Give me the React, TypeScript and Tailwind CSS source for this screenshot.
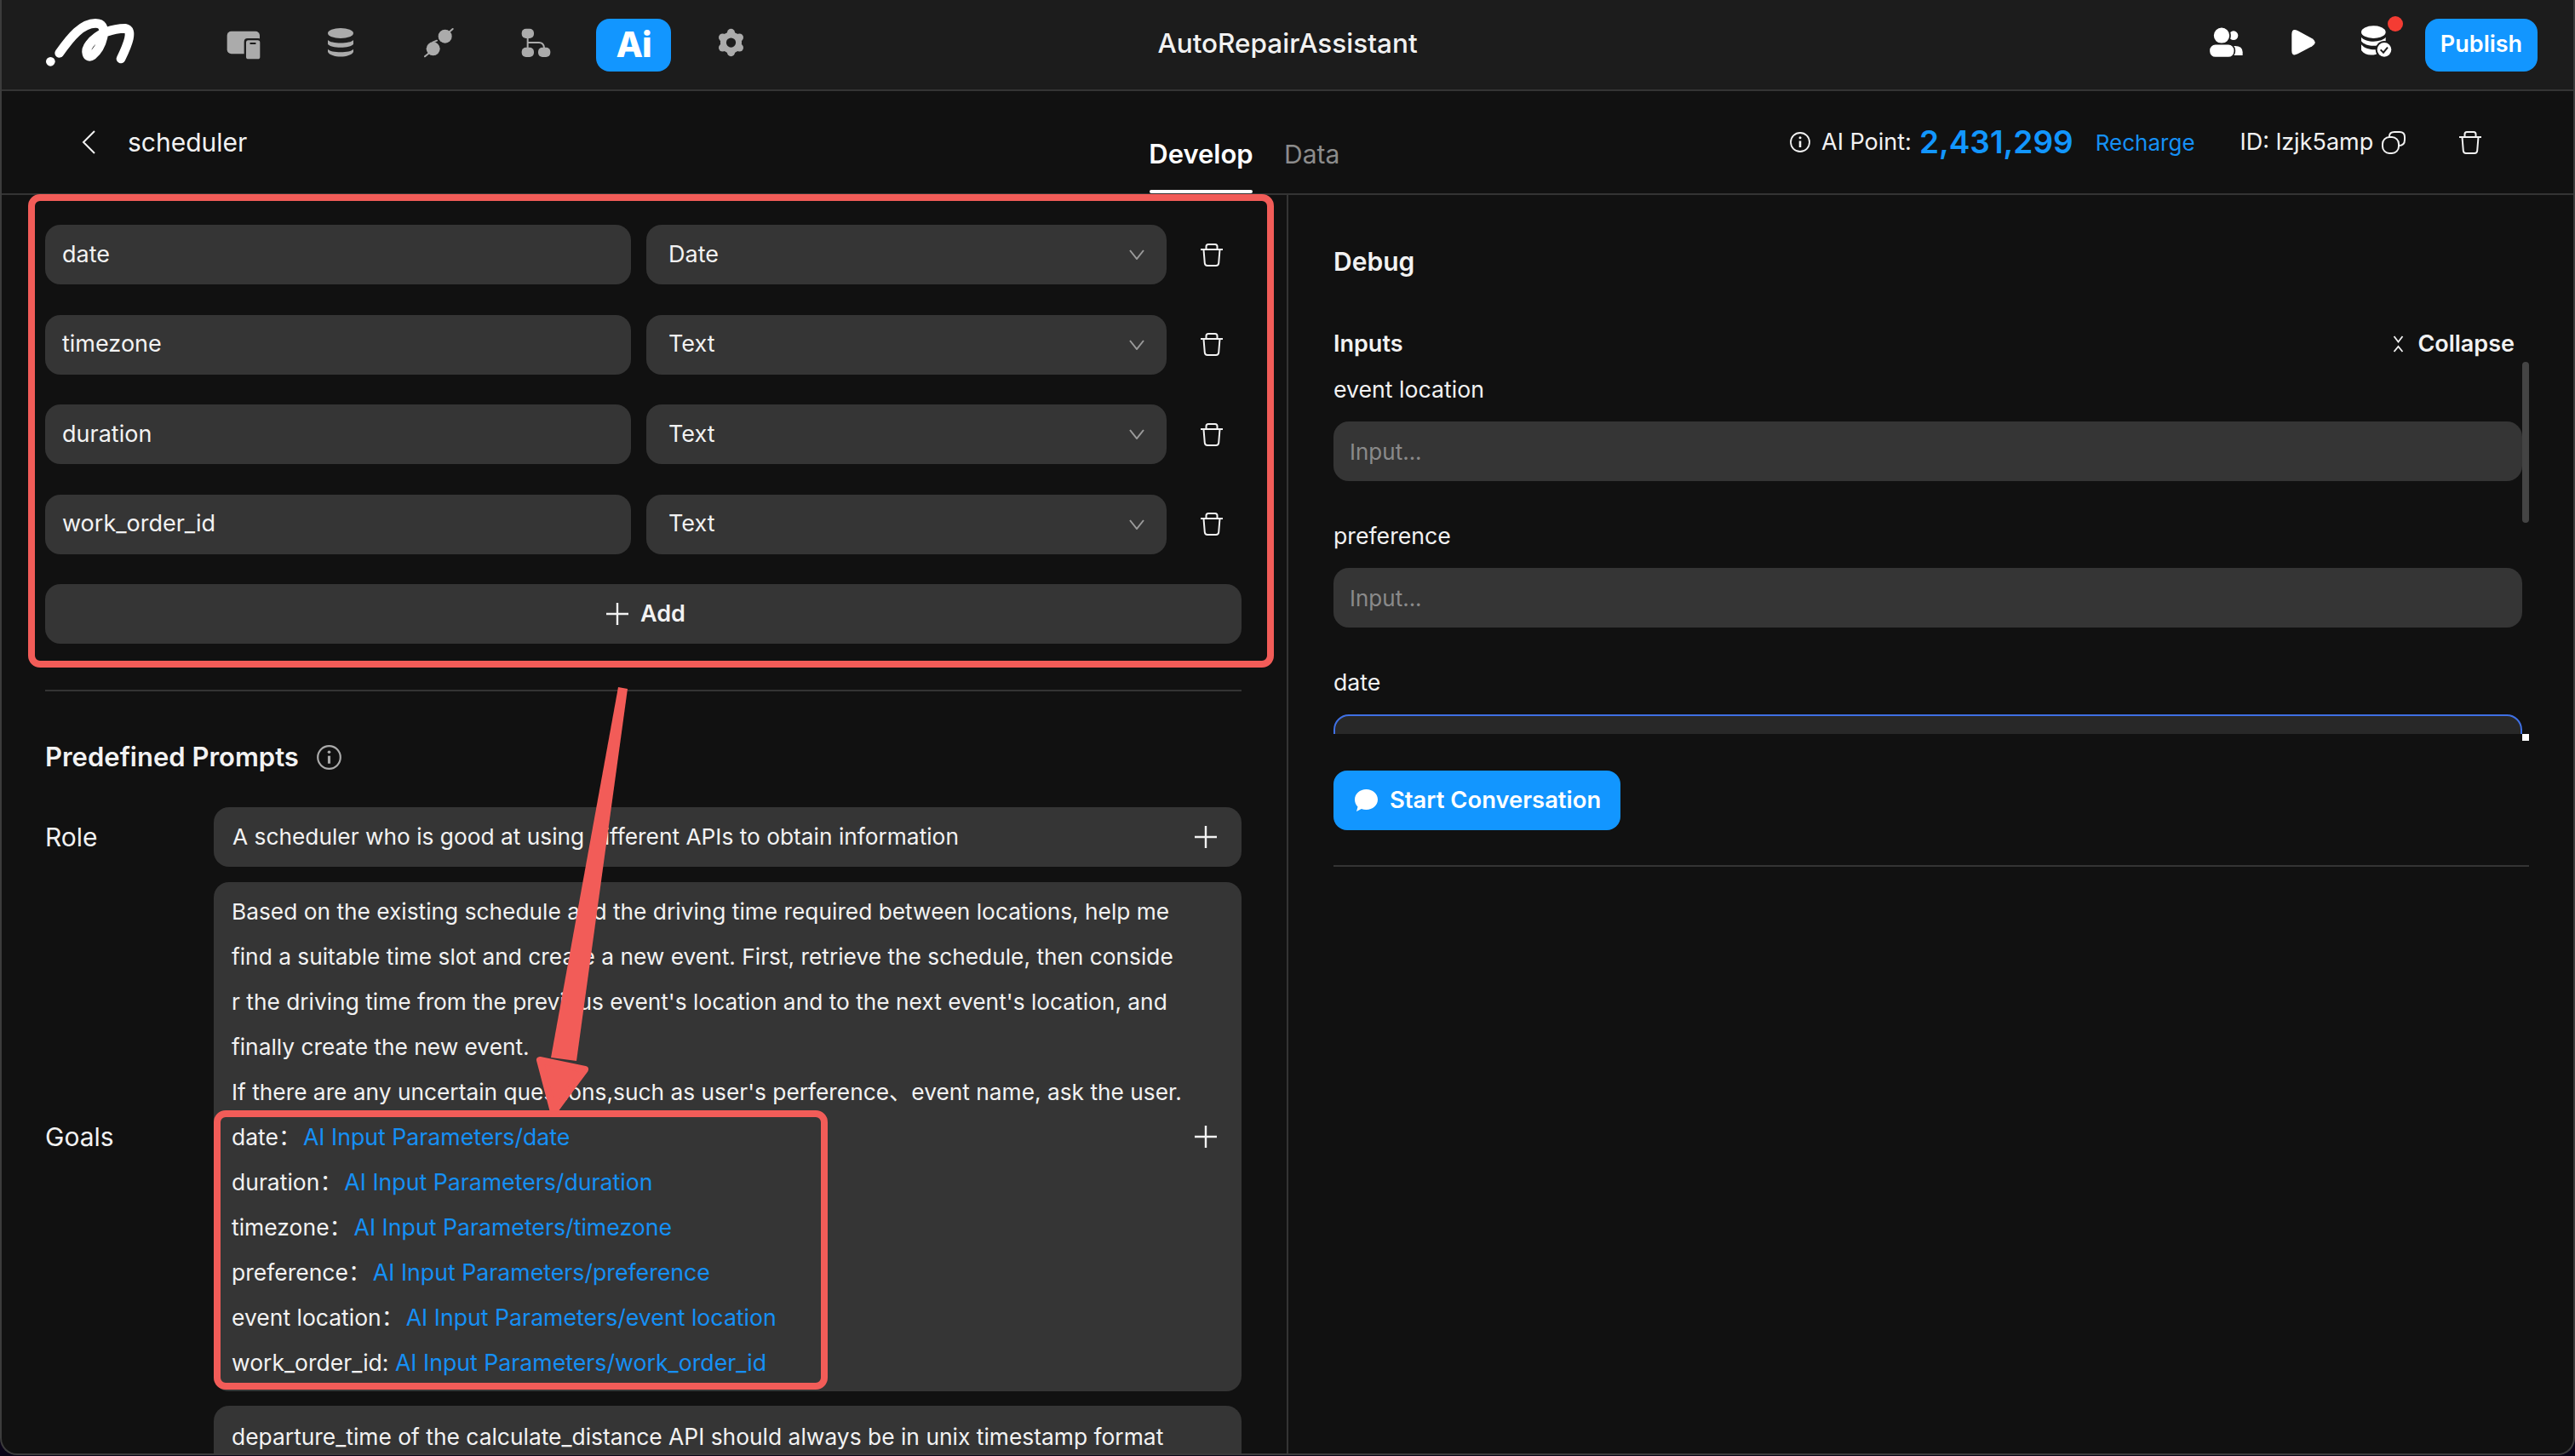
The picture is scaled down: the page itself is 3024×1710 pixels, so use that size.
import { ReactNode } from 'react';

const PARAMS = [
    { name: 'date', type: 'Date' },
    { name: 'timezone', type: 'Text' },
    { name: 'duration', type: 'Text' },
    { name: 'work_order_id', type: 'Text' },
];

const GOAL_TEXT = [
    'Based on the existing schedule and the driving time required between locations, help me',
    'find a suitable time slot and create a new event. First, retrieve the schedule, then conside',
    "r the driving time from the previous event's location and to the next event's location, and",
    'finally create the new event.',
    "If there are any uncertain questions,such as user's perference、event name, ask the user.",
];

const GOAL_REFS = [
    { label: 'date：\u200a', ref: 'AI Input Parameters/date' },
    { label: 'duration：\u200a', ref: 'AI Input Parameters/duration' },
    { label: 'timezone：\u200a', ref: 'AI Input Parameters/timezone' },
    { label: 'preference：\u200a', ref: 'AI Input Parameters/preference' },
    { label: 'event location：\u200a', ref: 'AI Input Parameters/event location' },
    { label: 'work_order_id: ', ref: 'AI Input Parameters/work_order_id' },
];

function TrashIcon() {
    return (
        <svg width="26" height="27" viewBox="0 0 26 27" fill="none" stroke="#f2f2f2" strokeWidth="2">
            <path d="M0 7h26" />
            <path d="M6.5 7V3.5Q6.5 1 9 1h8q2.500 0 2.500 2.500V7" />
            <path d="M3.500 7l1.300 16q.3 3 3.200 3h10q2.900 0 3.200-3L22.500 7" />
        </svg>
    );
}

function PlusIcon() {
    return (
        <svg className="shrink-0" width="26" height="26" viewBox="0 0 26 26" stroke="#f2f2f2" strokeWidth="2.400">
            <path d="M13 0v26M0 13h26" />
        </svg>
    );
}

function InfoIcon({ size, color }: { size: number; color: string }) {
    return (
        <svg width={size} height={size} viewBox="0 0 24 24" fill="none" stroke={color} strokeWidth="1.800">
            <circle cx="12" cy="12" r="11" />
            <path d="M12 10.500V18" strokeWidth="2.600" />
            <circle cx="12" cy="6.800" r="1.500" fill={color} stroke="none" />
        </svg>
    );
}

function Field({ children, className }: { children: ReactNode; className: string }) {
    return (
        <div className={`flex h-[70px] items-center rounded-[18px] bg-[#353535] text-[#f2f2f2] ${className}`}>
            {children}
        </div>
    );
}

function ParamRow({ name, type }: { name: string; type: string }) {
    return (
        <div className="flex items-center">
            <Field className="w-[688px] pl-[20px] text-[27px]">{name}</Field>
            <Field className="ml-[18px] w-[611px] justify-between pl-[26px] pr-[26px] text-[27px]">
                {type}
                <svg width="18" height="12" viewBox="0 0 18 12" fill="none" stroke="#9a9a9a" strokeWidth="2">
                    <path d="M1 1l8 10 8-10" />
                </svg>
            </Field>
            <div className="ml-[40px]">
                <TrashIcon />
            </div>
        </div>
    );
}

function TopBar() {
    return (
        <header className="flex h-[107px] shrink-0 items-center border-b-2 border-[#343434] bg-[#1c1c1c] pl-[50px] pr-[42px]">
            {/* logo */}
            <svg className="h-[75px] w-[112px]" viewBox="35 0 336 225" fill="none">
                <circle cx="57" cy="172" r="16" fill="#fff" />
                <path
                    d="M88 142C125 90 170 30 225 38C262 45 240 120 205 150C185 165 175 135 195 110C225 70 280 55 320 55C350 60 330 110 305 162"
                    stroke="#fff"
                    strokeWidth="32"
                    strokeLinecap="round"
                />
            </svg>
            <svg className="ml-[101px] h-[75px] w-[42px]" viewBox="675 0 126 225">
                <rect x="680" y="65" width="115" height="80" rx="15" fill="#ababab" />
                <rect x="740" y="90" width="62" height="78" rx="12" fill="#1c1c1c" />
                <rect x="747" y="97" width="49" height="66" rx="8" fill="#ababab" />
                <rect x="760" y="105" width="22" height="6" rx="3" fill="#1c1c1c" />
            </svg>
            <svg className="ml-[76px] h-[75px] w-[34px]" viewBox="1029 0 102 225" fill="#ababab">
                <ellipse cx="1080" cy="72" rx="45" ry="18" />
                <path d="M1035 96C1045 110 1115 110 1125 96V110C1115 126 1045 126 1035 110Z" />
                <path d="M1035 128C1045 142 1115 142 1125 128V138C1115 160 1045 160 1035 138Z" />
            </svg>
            <svg className="ml-[80px] h-[75px] w-[36px]" viewBox="50 0 108 225" fill="#ababab" stroke="#ababab">
                <circle cx="127" cy="83" r="24" strokeWidth="0" />
                <circle cx="85" cy="127" r="24" strokeWidth="0" />
                <path d="M143 67l11-10M69 143l-13 11M84 104l14-6" strokeWidth="6" strokeLinecap="round" fill="none" />
            </svg>
            <svg className="ml-[79px] h-[75px] w-[35px]" viewBox="395 0 105 225" fill="#ababab">
                <rect x="397" y="56" width="43" height="34" rx="15" />
                <rect x="397" y="122" width="43" height="34" rx="15" />
                <rect x="455" y="122" width="43" height="34" rx="15" />
                <path d="M418 88v36M418 105h40q16 0 18 18" fill="none" stroke="#ababab" strokeWidth="6" />
            </svg>
            <div className="ml-[53px] flex h-[62px] w-[88px] items-center justify-center rounded-[16px] bg-[#1296ff] text-[41px] font-extrabold tracking-tight text-white">
                Ai
            </div>
            <svg className="ml-[54px] h-[75px] w-[33px]" viewBox="1085 0 100 225" fill="#ababab">
                <circle cx="1135" cy="105" r="38" />
                <circle cx="1135" cy="70" r="14" />
                <circle cx="1135" cy="140" r="14" />
                <circle cx="1105" cy="87" r="14" />
                <circle cx="1165" cy="87" r="14" />
                <circle cx="1105" cy="123" r="14" />
                <circle cx="1165" cy="123" r="14" />
                <circle cx="1135" cy="105" r="17" fill="#1c1c1c" />
            </svg>

            {/* title sits over the bar's centre, whatever the icon rows measure */}
            <div className="absolute left-[2px] right-[2px] top-[29px] text-center text-[31.500px] font-medium leading-[44px] text-[#f2f2f2]">
                AutoRepairAssistant
            </div>

            <div className="ml-auto flex items-center">
                <svg className="h-[75px] w-[44px]" viewBox="40 0 132 225" fill="#fff">
                    <circle cx="130" cy="80" r="16" />
                    <path d="M125 117h10q27 0 27 22v11h-37Z" />
                    <circle cx="88" cy="80" r="30" stroke="#1c1c1c" strokeWidth="5" />
                    <rect x="44" y="110" width="90" height="48" rx="22" stroke="#1c1c1c" strokeWidth="5" />
                </svg>
                <svg className="ml-[51px] h-[75px] w-[34px]" viewBox="325 0 102 225" fill="#fff">
                    <path d="M335 76Q335 53 356 63L407 91Q428 104 407 118L356 145Q335 155 335 134Z" />
                </svg>
                <svg className="ml-[48px] h-[75px] w-[55px]" viewBox="570 0 165 225" fill="#fff">
                    <ellipse cx="622" cy="68" rx="43" ry="22" />
                    <path d="M579 86C595 106 650 106 665 86V100C650 122 595 122 579 100Z" />
                    <path d="M579 112C595 132 630 132 640 128L632 146C610 152 590 148 579 132Z" />
                    <circle cx="660" cy="130" r="28" stroke="#1c1c1c" strokeWidth="6" />
                    <path d="M647 130l10 10 15-18" fill="none" stroke="#1c1c1c" strokeWidth="6" />
                    <circle cx="699" cy="39" r="27" fill="#f43c33" />
                </svg>
                <div className="ml-[23px] flex h-[62px] w-[132px] items-center justify-center rounded-[16px] bg-[#1296ff] text-[27px] font-semibold text-white">
                    Publish
                </div>
            </div>
        </header>
    );
}

function SubHeader() {
    return (
        <div className="flex h-[122px] shrink-0 items-center border-b-2 border-[#343434]">
            <div className="flex w-[1348px] items-center pl-[94px]">
                <svg width="16" height="28" viewBox="0 0 16 28" fill="none" stroke="#f2f2f2" strokeWidth="2">
                    <path d="M15 1L2 14l13 13" />
                </svg>
                <span className="ml-[38px] text-[30px] text-[#f2f2f2]">scheduler</span>
            </div>
            <div className="flex h-full w-[752px] items-end">
                <div className="relative flex h-[104px] w-[121px] items-start justify-center pt-[38px] text-[31px] font-semibold leading-[40px] text-white">
                    Develop
                    <div className="absolute inset-x-0 bottom-0 h-[4px] rounded-[2px] bg-white" />
                </div>
                <div className="ml-[37px] h-[104px] pt-[38px] text-[30px] leading-[40px] text-[#8c8c8c]">Data</div>
            </div>
            <div className="flex items-center text-[27px] text-[#f2f2f2]">
                <InfoIcon size={24} color="#f2f2f2" />
                <span className="ml-[13px]">AI Point:</span>
                <span className="ml-[9px] text-[37px] font-semibold text-[#1296ff]">2,431,299</span>
                <span className="ml-[26px] text-[26px] text-[#1590f5]">Recharge</span>
                <span className="ml-[53px]">ID: lzjk5amp</span>
                <svg className="ml-[10px]" width="28" height="27" viewBox="0 0 28 27" fill="none" stroke="#f2f2f2" strokeWidth="2">
                    <rect x="1" y="7" width="19" height="19" rx="8" />
                    <path d="M9 7V6q0-5 6-5h6q6 0 6 6v3q0 7-7 7" />
                </svg>
                <div className="ml-[63px]">
                    <TrashIcon />
                </div>
            </div>
        </div>
    );
}

function LeftPanel() {
    return (
        <div className="w-[1511px] shrink-0 overflow-hidden border-r-2 border-[#343434] pl-[51px] pr-[53px] pt-[35px]">
            <div className="flex flex-col gap-[35.500px]">
                {PARAMS.map(p => (
                    <ParamRow key={p.name} name={p.name} type={p.type} />
                ))}
                <Field className="justify-center gap-[14px] pl-[6px] text-[27px] font-semibold">
                    <PlusIcon />
                    Add
                </Field>
            </div>
            <div className="mt-[54px] h-[2px] bg-[#343434]" />
            <div className="mt-[56px] flex h-[42px] items-center gap-[21px] text-[31px] font-semibold leading-[42px] text-[#f2f2f2]">
                Predefined Prompts
                <InfoIcon size={29} color="#aaaaaa" />
            </div>
            <div className="mt-[38px] flex items-center">
                <div className="w-[198px] shrink-0 text-[30px] text-[#f2f2f2]">Role</div>
                <Field className="flex-1 justify-between pl-[22px] pr-[29px] text-[26.300px]">
                    A scheduler who is good at using different APIs to obtain information
                    <PlusIcon />
                </Field>
            </div>
            <div className="mt-[18px] flex items-center">
                <div className="w-[198px] shrink-0 text-[30px] text-[#f2f2f2]">Goals</div>
                <div className="flex h-[598px] min-w-0 flex-1 items-center justify-between rounded-[18px] bg-[#353535] pl-[21px] pr-[29px] text-[26.300px] leading-[53px] text-[#f2f2f2]">
                    <div className="whitespace-pre">
                        {GOAL_TEXT.map(line => (
                            <div key={line}>{line}</div>
                        ))}
                        {GOAL_REFS.map(g => (
                            <div key={g.ref} className="text-[26.500px]">
                                {g.label}
                                <span className="text-[26.700px] text-[#1590f5]">{g.ref}</span>
                            </div>
                        ))}
                    </div>
                    <PlusIcon />
                </div>
            </div>
            <div className="ml-[198px] mt-[17px] h-[120px] rounded-[18px] bg-[#353535] pl-[21px] pt-[10px] text-[26.400px] leading-[53px] text-[#f2f2f2]">
                departure_time of the calculate_distance API should always be in unix timestamp format
            </div>
        </div>
    );
}

function DebugInput({ label }: { label: string }) {
    return (
        <div>
            <div className="mb-[20px] h-[36px] text-[26.700px] leading-[36px] text-[#f2f2f2]">{label}</div>
            <div className="mb-[46px] flex h-[70px] items-center rounded-[18px] bg-[#353535] pl-[19px] text-[26px] text-[#8a8a8a]">
                Input...
            </div>
        </div>
    );
}

function RightPanel() {
    return (
        <div className="min-w-0 flex-1 pl-[53px] pr-[52px] pt-[58px]">
            <div className="h-[40px] text-[30px] font-semibold leading-[40px] text-[#f2f2f2]">Debug</div>
            <div className="mt-[57px] flex h-[40px] items-center justify-between text-[27px] font-semibold text-[#f2f2f2]">
                Inputs
                <div className="mr-[17px] flex items-center gap-[16px]">
                    <svg width="13" height="20" viewBox="0 0 13 20" fill="none" stroke="#f2f2f2" strokeWidth="1.800">
                        <path d="M1.500 1l5 6.500 5-6.500M1.500 19l5-6 5 6" />
                    </svg>
                    Collapse
                </div>
            </div>
            <div className="relative h-[438px] overflow-hidden pr-[8px] pt-[15px]">
                <DebugInput label="event location" />
                <DebugInput label="preference" />
                <div className="mb-[20px] h-[36px] text-[26.700px] leading-[36px] text-[#f2f2f2]">date</div>
                <div className="h-[70px] rounded-[18px] border-2 border-[#3f70e4] bg-[#282828]" />
                <div className="absolute right-0 top-[1px] h-[189px] w-[8px] rounded-[4px] bg-[#444444]" />
            </div>
            <div className="ml-auto h-[8px] w-[8px] bg-white" />
            <div className="mt-[35px] flex h-[70px] w-[337px] items-center gap-[14px] rounded-[16px] bg-[#1296ff] pl-[25px] text-[27.400px] font-semibold text-white">
                <svg width="27" height="26" viewBox="0 0 27 26" fill="#fff">
                    <path d="M13.500 0C21 0 27 5.400 27 12S21 24 13.500 24C11.500 24 9.500 23.700 7.800 23L2 26L3.500 20.500C1.300 18.300 0 15.300 0 12C0 5.400 6 0 13.500 0Z" />
                </svg>
                Start Conversation
            </div>
            <div className="mt-[41px] h-[2px] bg-[#343434]" />
        </div>
    );
}

function Annotations() {
    return (
        <>
            <div className="absolute left-[31px] top-[228px] h-[556px] w-[1463px] rounded-[14px] border-[8px] border-[#f25c58]" />
            <div className="absolute left-[249px] top-[1304px] h-[328px] w-[721px] rounded-[14px] border-[8px] border-[#f25c58]" />
            <svg className="absolute left-[618px] top-[800px]" width="130" height="510" viewBox="620 800 130 510" fill="#f25c58">
                <path d="M726 807L737 809L677 1246L647 1242Z" />
                <path d="M634 1245L687 1256L650 1306Z" stroke="#f25c58" strokeWidth="8" strokeLinejoin="round" />
            </svg>
        </>
    );
}

export default function App() {
    return (
        <div className="h-[1710px] w-[3024px] overflow-hidden bg-[#0a0418] font-[Inter,'Noto_Sans_CJK_SC',sans-serif]">
            <div className="relative flex h-[1709px] w-[3024px] flex-col overflow-hidden rounded-b-[20px] border-x-2 border-b-2 border-[#3c3c3c] bg-[#111111]">
                <TopBar />
                <SubHeader />
                <div className="flex min-h-0 flex-1">
                    <LeftPanel />
                    <RightPanel />
                </div>
                <Annotations />
            </div>
        </div>
    );
}
